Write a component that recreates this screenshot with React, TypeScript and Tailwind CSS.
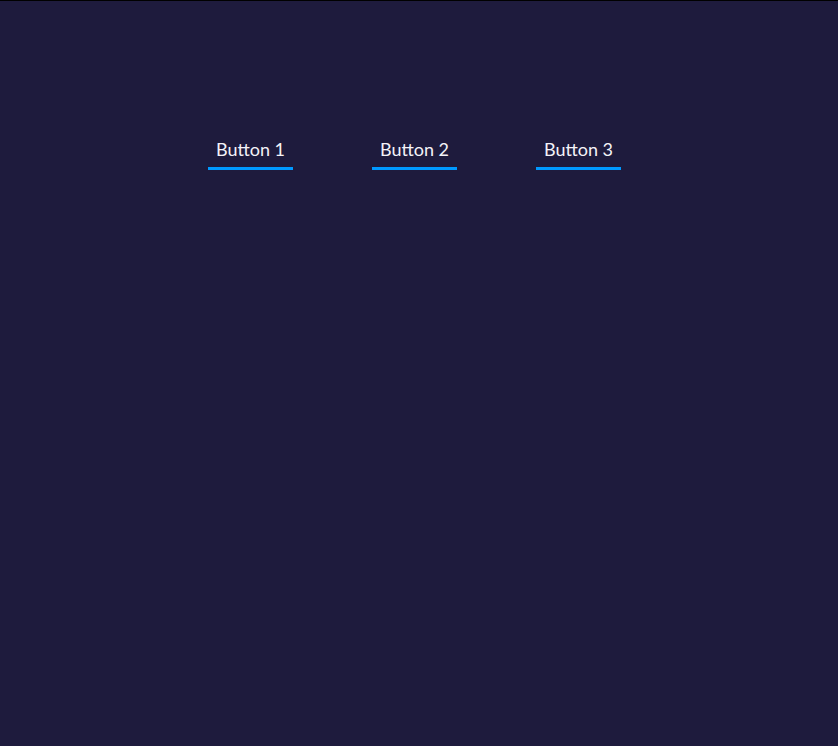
const BUTTONS = ["Button 1", "Button 2", "Button 3"];

export default function App() {
  return (
    <div className="h-[746px] w-full bg-[#1e1b3d] border-t border-black" style={{ fontFamily: "Lato, 'Open Sans', sans-serif" }}>
      <nav className="flex gap-[79px] pl-[208px] pt-[137px]">
        {BUTTONS.map((b) => (
          <button
            key={b}
            className="w-[85px] border-b-[3px] border-[#0099ff] pb-[6px] text-center text-[18px] leading-[23px] text-[#f4f3f8]"
          >
            {b}
          </button>
        ))}
      </nav>
    </div>
  );
}
